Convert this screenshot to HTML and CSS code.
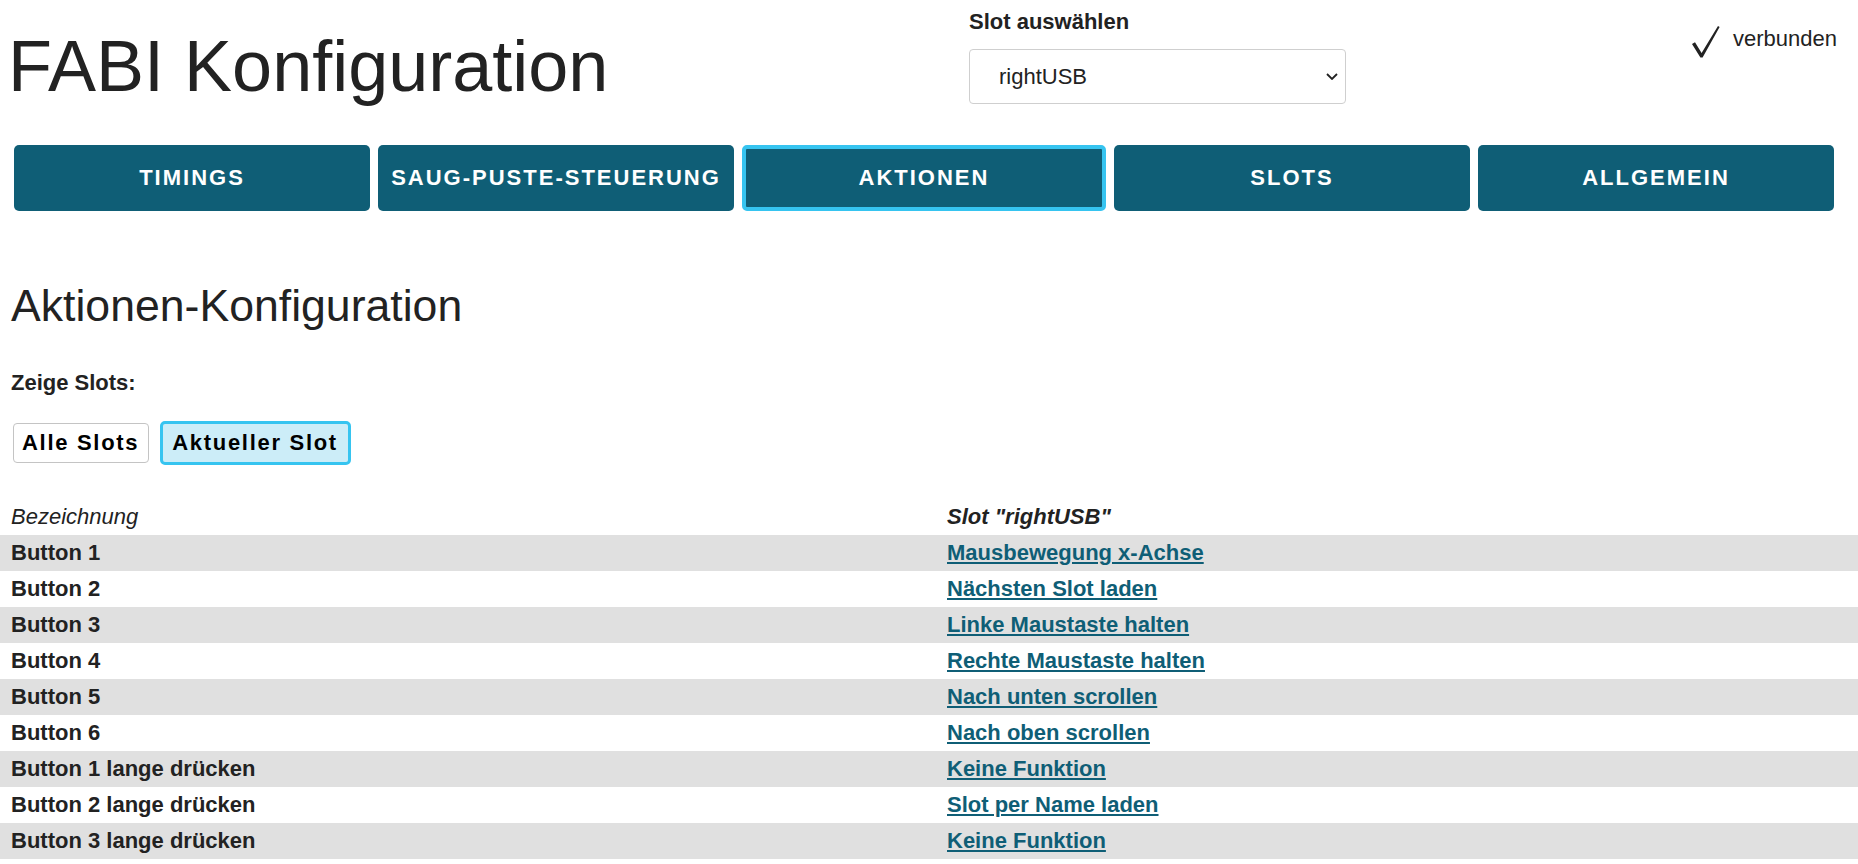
FILE: index.html
```html
<!DOCTYPE html>
<html lang="de">
<head>
<meta charset="utf-8">
<title>FABI Konfiguration</title>
<link rel="stylesheet" href="styles.css">
</head>
<body>
<header class="header">
  <h1 class="title">FABI Konfiguration</h1>
  <div class="slot-group">
    <label class="slot-label" for="slot">Slot auswählen</label>
    <div class="select-wrap">
      <select id="slot" class="slot-select">
        <option>rightUSB</option>
      </select>
      <svg class="chevron" width="12" height="7" viewBox="0 0 12 7" aria-hidden="true"><path d="M1 1 L6 6 L11 1" fill="none" stroke="#222" stroke-width="1.8"/></svg>
    </div>
  </div>
  <div class="status">
    <svg class="check" width="28" height="32" viewBox="0 0 28 32" aria-hidden="true"><path d="M0 18 L3 16.3 L9.6 27 L26 0 L27.6 0.9 L10.6 31.6 L8.4 31.6 Z" fill="#222"/></svg>
    <span class="status-text">verbunden</span>
  </div>
</header>

<nav class="nav">
  <button class="nav-btn">Timings</button>
  <button class="nav-btn">Saug-Puste-Steuerung</button>
  <button class="nav-btn nav-btn-active">Aktionen</button>
  <button class="nav-btn">Slots</button>
  <button class="nav-btn">Allgemein</button>
</nav>

<main>
  <section class="intro">
    <h2 class="section-title">Aktionen-Konfiguration</h2>
    <div class="show-label">Zeige Slots:</div>
    <div class="toggle-row">
      <button class="toggle">Alle Slots</button>
      <button class="toggle toggle-active">Aktueller Slot</button>
    </div>
  </section>

  <table class="actions">
    <thead>
      <tr><th class="col-name">Bezeichnung</th><th class="col-slot">Slot "rightUSB"</th></tr>
    </thead>
    <tbody>
      <tr><td>Button 1</td><td><a href="#">Mausbewegung x-Achse</a></td></tr>
      <tr><td>Button 2</td><td><a href="#">Nächsten Slot laden</a></td></tr>
      <tr><td>Button 3</td><td><a href="#">Linke Maustaste halten</a></td></tr>
      <tr><td>Button 4</td><td><a href="#">Rechte Maustaste halten</a></td></tr>
      <tr><td>Button 5</td><td><a href="#">Nach unten scrollen</a></td></tr>
      <tr><td>Button 6</td><td><a href="#">Nach oben scrollen</a></td></tr>
      <tr><td>Button 1 lange drücken</td><td><a href="#">Keine Funktion</a></td></tr>
      <tr><td>Button 2 lange drücken</td><td><a href="#">Slot per Name laden</a></td></tr>
      <tr><td>Button 3 lange drücken</td><td><a href="#">Keine Funktion</a></td></tr>
    </tbody>
  </table>
</main>
</body>
</html>
```

FILE: styles.css
```css
html, body {
  margin: 0;
  padding: 0;
  background: #ffffff;
}

body {
  font-family: "Liberation Sans", Arial, sans-serif;
  color: #222222;
  overflow: hidden;
}

.header {
  display: grid;
  grid-template-columns: 961px 377px 1fr;
  align-items: start;
  padding: 0 21px 0 8px;
}

.title {
  margin: 30px 0 0;
  font-size: 72px;
  line-height: 72px;
  font-weight: normal;
}

.slot-group {
  padding-top: 9px;
  display: flex;
  flex-direction: column;
}

.slot-label {
  font-size: 22px;
  line-height: 26px;
  font-weight: bold;
  margin-bottom: 14px;
}

.select-wrap {
  position: relative;
}

.slot-select {
  appearance: none;
  -webkit-appearance: none;
  display: block;
  width: 377px;
  height: 55px;
  margin: 0;
  padding: 0 40px 0 29px;
  font-family: "Liberation Sans", Arial, sans-serif;
  font-size: 22px;
  color: #222222;
  background: #ffffff;
  border: 1px solid #cfcfcf;
  border-radius: 4px;
}

.chevron {
  position: absolute;
  right: 8px;
  top: 24px;
}

.status {
  justify-self: end;
  display: flex;
  align-items: flex-start;
  gap: 13px;
  padding-top: 26px;
}

.status-text {
  font-size: 22px;
  line-height: 26px;
}

.nav {
  display: flex;
  gap: 8px;
  margin: 41px 24px 0 14px;
}

.nav-btn {
  flex: 1;
  height: 66px;
  margin: 0;
  padding: 0;
  background: #0f5e76;
  color: #ffffff;
  border: 0;
  border-radius: 5px;
  font-family: "Liberation Sans", Arial, sans-serif;
  font-size: 22px;
  font-weight: bold;
  letter-spacing: 2px;
  text-transform: uppercase;
}

.nav-btn-active {
  border: 4px solid #36c4f0;
}

.intro {
  padding: 69px 11px 0;
}

.section-title {
  margin: 0;
  font-size: 44.6px;
  line-height: 52px;
  font-weight: normal;
}

.show-label {
  margin-top: 38px;
  font-size: 22px;
  line-height: 26px;
  font-weight: bold;
}

.toggle-row {
  display: flex;
  align-items: center;
  gap: 11px;
  margin-top: 25px;
  padding-left: 2px;
}

.toggle {
  margin: 0;
  padding: 6px 9px 6px 8px;
  font-family: "Liberation Sans", Arial, sans-serif;
  font-size: 22px;
  line-height: 26px;
  font-weight: bold;
  letter-spacing: 1.7px;
  color: #000000;
  background: #ffffff;
  border: 1px solid #c4c4c4;
  border-radius: 4px;
}

.toggle-active {
  padding: 6px 10px 6px 9px;
  letter-spacing: 1.7px;
  border: 3px solid #36c4f0;
  border-radius: 5px;
  background: #ccedf8;
}

.actions {
  width: 100%;
  margin-top: 34px;
  border-collapse: collapse;
  font-size: 22px;
  line-height: 26px;
}

.actions th,
.actions td {
  padding: 5px 11px;
  text-align: left;
}

.actions th {
  font-style: italic;
  font-weight: normal;
}

.actions th.col-slot {
  font-weight: bold;
}

.col-name {
  width: 914px;
}

.actions td {
  font-weight: bold;
}

.actions tbody tr:nth-child(odd) {
  background: #e0e0e0;
}

.actions a {
  color: #0f5e76;
  text-decoration: underline;
}
```
